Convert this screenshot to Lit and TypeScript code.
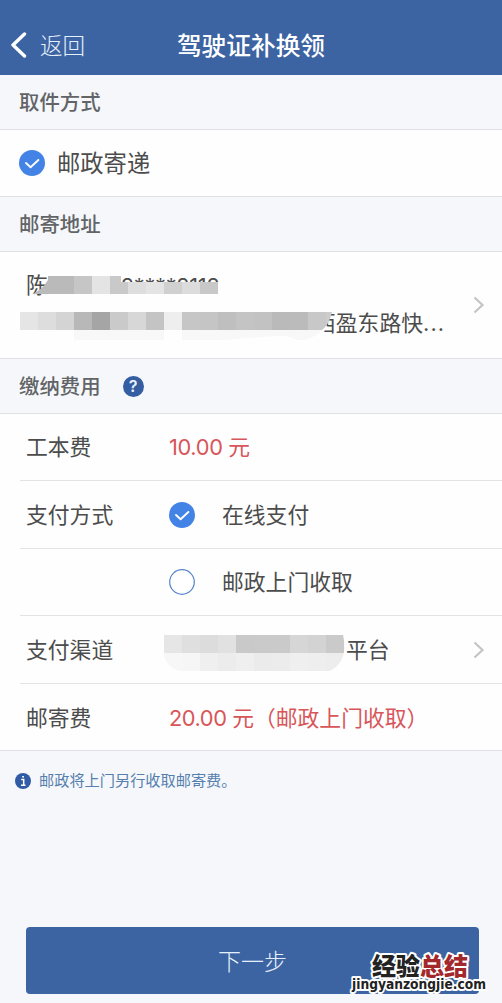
import { LitElement, html, svg, css } from "lit";
import { customElement } from "lit/decorators.js";

type Block = [x: number, y: number, w: number, h: number, fill: string];

const ADDRESS_BLOCKS: Block[] = [
  [20, 0, 54, 18, "#bababa"], [74, 0, 18, 18, "#c6c6c6"], [92, 0, 18, 18, "#e4e4e4"], [110, 0, 11, 18, "#c9c9c9"],
  [121, 6, 7, 12, "#c9c9c9"], [128, 6, 18, 12, "#dedede"], [146, 6, 18, 12, "#e4e4e4"], [164, 6, 18, 12, "#d0d0d0"], [182, 6, 18, 12, "#dcdcdc"], [200, 6, 18, 12, "#c8c8c8"],
];
const STREET_BLOCKS: Block[] = [
  "#e5e5e5", "#dddddd", "#d4d4d4", "#b8b8b8", "#a5a5a5", "#cacaca", "#d7d7d7", "#c4c4c4", "#eeeeee",
  "#c6c6c6", "#c5c5c5", "#bfbfbf", "#c4c4c4", "#c2c2c2", "#bababa", "#bbbbbb", "#c8c8c8", "#cccccc",
].map((c, i) => [20 + i * 18, 36, 18, 18, c] as Block);
const CHANNEL_BLOCKS: Block[] = [
  ...["#e6e6e6", "#dfdfdf", "#dcdcdc", "#e1e1e1", "#c9c9c9", "#cacaca", "#cacaca", "#d6d6d6", "#d3d3d3", "#cacaca"].map((c, i) => [i * 18, 0, 18.2, 18, c] as Block),
  ...["#f7f7f7", "#f6f6f6", "#efefef", "#ececec", "#efefef", "#ebebeb", "#ececec", "#efefef", "#eeeeee", "#ededed"].map((c, i) => [i * 18, 18, 18.2, 18, c] as Block),
];
const blocks = (list: Block[]) =>
  list.map(([x, y, w, h, f]) => svg`<rect x=${x} y=${y} width=${w} height=${h} fill=${f} />`);

const tick = html`<svg class="radio" viewBox="0 0 26 26"><circle cx="13" cy="13" r="13" fill="#4383e6" /><path d="M7 13l4.6 4.2 7.8-7.2" fill="none" stroke="#fff" stroke-width="1.9" stroke-linecap="round" stroke-linejoin="round" /></svg>`;
const ring = html`<svg class="radio" viewBox="0 0 26 26"><circle cx="13" cy="13" r="12.3" fill="#fff" stroke="#5585ca" stroke-width="1.2" /></svg>`;
const chevron = html`<svg class="chevron" viewBox="0 0 12 18"><path d="M1.5 1.5L9.5 9l-8 7.5" fill="none" stroke="#c4c4c6" stroke-width="2.2" /></svg>`;

@customElement("app-root")
export class AppRoot extends LitElement {
  static styles = css`
    :host { display: flex; flex-direction: column; box-sizing: border-box; height: 1003px; background: #f5f7fa; color: #4c4c4c; font: 21.8px/32px Inter, "Noto Sans CJK SC", sans-serif; white-space: nowrap; overflow: hidden; }
    * { box-sizing: border-box; }
    svg { display: block; flex: none; }
    .bar { height: 75px; flex: none; display: grid; grid-template-columns: 1fr auto 1fr; align-items: center; padding: 15px 10px 0; background: #3c63a2; color: #fff; }
    .back { display: flex; align-items: center; gap: 13px; font-size: 22.6px; font-weight: 300; color: #e6f0fc; }
    .back svg { width: 17px; height: 26px; }
    .back span, .title { padding-top: 1px; }
    .title { font-size: 24.7px; font-weight: 500; }
    .head { flex: none; height: 55px; display: flex; align-items: center; gap: 22px; padding: 2px 19px 0; font-size: 20.4px; font-weight: 500; color: #626467; border-bottom: 1px solid #dfe1e3; }
    .card { flex: none; background: #fefefe; border-bottom: 1px solid #dfe1e3; }
    .method { height: 67px; display: flex; align-items: center; gap: 12px; padding: 0 19px; font-size: 23.3px; }
    .method span { padding-top: 2px; }
    .radio { width: 26px; height: 26px; }
    .address { position: relative; height: 107px; display: flex; align-items: center; justify-content: space-between; padding: 0 17px 0 26px; }
    .lines { display: flex; flex-direction: column; gap: 5px; padding-bottom: 3px; }
    .owner { display: flex; align-items: center; }
    .street { padding-left: 288px; }
    .dots { letter-spacing: 1.1px; }
    .phone { padding: 2px 0 0 73px; letter-spacing: -0.3px; }
    .mask { position: absolute; left: 0; top: 0; width: 350px; height: 106px; }
    .chevron { width: 12px; height: 18px; }
    .help { width: 21px; height: 21px; margin-top: -1px; border-radius: 50%; background: #355da2; color: #e9f2ff; font: 600 16px/21px Inter, sans-serif; text-align: center; }
    .rows { padding-left: 20px; }
    .row { height: 67.5px; display: grid; grid-template-columns: 143px 1fr auto; align-items: center; padding: 1px 17px 0 6px; border-bottom: 1px solid #e4e4e5; }
    .row:first-child { height: 67px; padding-top: 0; }
    .row:last-child { border: 0; height: 66.5px; padding-top: 2px; }
    .choice { display: flex; align-items: center; gap: 27px; }
    .price { color: #d8565a; }
    .num { letter-spacing: -0.35px; }
    .wide { letter-spacing: -0.45px; }
    .channel { display: flex; align-items: center; gap: 1px; margin-left: -5px; }
    .channel svg { width: 181px; height: 36px; margin-top: 7px; }
    .note { display: flex; align-items: center; gap: 8px; height: 60px; padding-left: 15px; font-size: 15.2px; color: #557fae; }
    .info { width: 16px; height: 16px; }
    .foot { margin-top: auto; padding: 0 23px 9px 26px; position: relative; }
    .next { display: block; width: 100%; height: 67px; padding: 0; border: 0; border-radius: 4px; background: #3c63a2; color: #e6f0fc; font: 300 23px/67px "Noto Sans CJK SC", sans-serif; }
    .stamp { position: absolute; left: 346px; top: 17px; width: 150px; height: 59px; overflow: visible; }
    .stamp text { paint-order: stroke; stroke: #fff; stroke-linejoin: round; font-weight: 900; }
    .cn { font-family: "Noto Sans CJK SC", sans-serif; font-size: 24px; stroke-width: 4px; }
    .stamp .site { font-family: "DejaVu Sans", sans-serif; font-size: 14px; font-weight: 700; stroke-width: 4px; }
  `;

  render() {
    return html`
      <header class="bar">
        <div class="back"><svg viewBox="0 0 17 26"><path d="M14.5 2L3 13l11.5 11" fill="none" stroke="#fff" stroke-width="3.4" stroke-linecap="round" stroke-linejoin="round" /></svg><span>返回</span></div>
        <div class="title">驾驶证补换领</div>
      </header>
      <div class="head">取件方式</div>
      <div class="card method">${tick}<span>邮政寄递</span></div>
      <div class="head">邮寄地址</div>
      <div class="card address">
        <div class="lines">
          <div class="owner">陈<span class="phone">2****2112</span></div>
          <div class="street">西盈东路快<span class="dots">...</span></div>
        </div>
        ${chevron}
        <svg class="mask" viewBox="0 0 350 106">
          <defs><clipPath id="a"><path d="M48 24H218V42H32Q42 38 48 28ZM20 60H332Q329 73 322 78H20Z" /></clipPath></defs>
          <path d="M48 30H222V48H48ZM20 59H330L322 88H36Q22 82 20 76Z" fill="#fefefe" />
          <path d="M74 78h90v10H74zM182 78h140q-10 11-24 10-12-5-22-4-30 2-52 4h-42z" fill="#f8f8f8" />
          <g clip-path="url(#a)"><g transform="translate(0 24)">${blocks(ADDRESS_BLOCKS)}${blocks(STREET_BLOCKS)}</g></g>
        </svg>
      </div>
      <div class="head">缴纳费用<span class="help">?</span></div>
      <div class="card rows">
        <div class="row"><span>工本费</span><span class="price"><span class="num">10.00 </span>元</span></div>
        <div class="row"><span>支付方式</span><span class="choice">${tick}在线支付</span></div>
        <div class="row"><span></span><span class="choice">${ring}邮政上门收取</span></div>
        <div class="row"><span>支付渠道</span>
          <span class="channel"><svg viewBox="0 0 181 36"><defs><clipPath id="b"><path d="M0 0H179Q185 26 166 36H16Q2 32 0 20Z" /></clipPath></defs><g clip-path="url(#b)">${blocks(CHANNEL_BLOCKS)}</g></svg>平台</span>${chevron}</div>
        <div class="row"><span>邮寄费</span><span class="price"><span class="wide">20.00 </span>元（邮政上门收取）</span></div>
      </div>
      <div class="note"><svg class="info" viewBox="0 0 16 16"><circle cx="8" cy="8" r="8" fill="#315ba5" /><path d="M6.2 6.5H8.7V12M6 12.2h4.5M7.2 3.7h1.8" fill="none" stroke="#fff" stroke-width="1.5" /></svg>邮政将上门另行收取邮寄费。</div>
      <footer class="foot">
        <button class="next">下一步</button>
        <svg class="stamp" viewBox="0 0 150 59"><text class="cn" x="26" y="31" fill="#222">经验<tspan fill="#a3282c">总结</tspan></text><text class="site" x="6" y="45" textLength="134" lengthAdjust="spacingAndGlyphs" fill="#222">jingyanzongjie.com</text></svg>
      </footer>`;
  }
}
